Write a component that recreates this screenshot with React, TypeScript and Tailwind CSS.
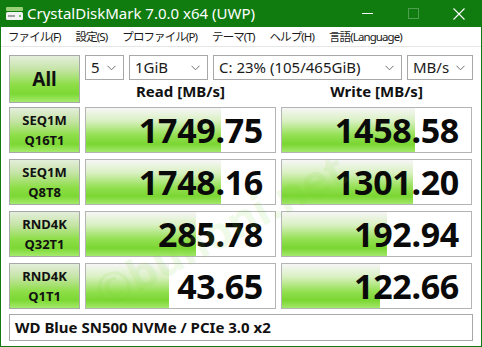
import React from 'react';

const rows = [
  { a: 'SEQ1M', b: 'Q16T1', read: '1749.75', write: '1458.58', rw: 135, ww: 133 },
  { a: 'SEQ1M', b: 'Q8T8', read: '1748.16', write: '1301.20', rw: 135, ww: 131 },
  { a: 'RND4K', b: 'Q32T1', read: '285.78', write: '192.94', rw: 110, ww: 105 },
  { a: 'RND4K', b: 'Q1T1', read: '43.65', write: '122.66', rw: 83, ww: 98 },
];

const btnGrad =
  'bg-[linear-gradient(to_bottom,#e4eedc_0%,#c4e4a4_30%,#8ede48_62%,#7cd834_82%,#a4ea6c_100%)]';
const barGrad =
  'bg-[linear-gradient(to_bottom,#f6f6f6_0%,#d8f0c0_30%,#94e052_62%,#7ad632_82%,#a2e86a_100%)]';

function Combo({ text, className }: { text: string; className: string }) {
  return (
    <div className={`h-[25px] border border-[#a8a8a8] bg-white flex items-center pl-[5px] pr-[7px] ${className}`}>
      <span className="flex-1 text-[15px] text-[#1a1a1a] leading-none whitespace-nowrap">{text}</span>
      <svg width="9" height="6" viewBox="0 0 9 6" className="ml-1">
        <path d="M0.5 0.8 L4.5 4.8 L8.5 0.8" fill="none" stroke="#707070" strokeWidth="1" />
      </svg>
    </div>
  );
}

function Meter({ value, width }: { value: string; width: number }) {
  return (
    <div className="relative w-[191px] h-full border border-[#b4b4b4] bg-white overflow-hidden">
      <div className={`absolute left-0 top-0 bottom-0 ${barGrad}`} style={{ width }} />
      <div className="relative h-full flex items-center justify-end pr-[12px] text-[34px] font-bold text-[#0a0a0a] leading-none tracking-[-0.3px]">
        {value}
      </div>
    </div>
  );
}

export default function App() {
  return (
    <div className="w-[482px] h-[347px] bg-[#107c10] flex flex-col font-['Noto_Sans',sans-serif] overflow-hidden">
      {/* Title bar */}
      <div className="h-[27px] flex items-center text-white shrink-0">
        <svg width="20" height="16" viewBox="0 0 20 16" className="ml-[5px] mr-[2px]">
          <rect x="1" y="1" width="17" height="4" rx="1" fill="#9ad07a" />
          <rect x="1" y="6" width="17" height="8" rx="1.5" fill="#f2f2f2" />
          <rect x="3" y="9" width="7" height="2" fill="#a0a0a0" />
          <circle cx="15" cy="10" r="1" fill="#4caf50" />
        </svg>
        <span className="text-[15px] leading-none">CrystalDiskMark 7.0.0 x64 (UWP)</span>
        <div className="ml-auto flex items-center h-full">
          <div className="w-[46px] h-full flex items-center justify-center">
            <div className="w-[11px] h-px bg-white" />
          </div>
          <div className="w-[46px] h-full flex items-center justify-center">
            <div className="w-[11px] h-[11px] border border-[#4f9f4f]" />
          </div>
          <div className="w-[46px] h-full flex items-center justify-center">
            <svg width="12" height="12" viewBox="0 0 12 12">
              <path d="M0.5 0.5 L11.5 11.5 M11.5 0.5 L0.5 11.5" stroke="white" strokeWidth="1.1" />
            </svg>
          </div>
        </div>
      </div>

      {/* Menu */}
      <div className="mx-px h-[19px] bg-white flex items-center gap-[15px] pl-[7px] text-[11.5px] tracking-[-0.9px] text-[#1a1a1a] font-['Noto_Sans','Noto_Sans_CJK_JP',sans-serif] leading-none shrink-0">
        <span>ファイル(F)</span>
        <span>設定(S)</span>
        <span>プロファイル(P)</span>
        <span>テーマ(T)</span>
        <span>ヘルプ(H)</span>
        <span>言語(Language)</span>
      </div>

      {/* Content */}
      <div className="relative mx-px mb-px flex-1 bg-white border-t border-[#e6e6e6] px-[8px] pt-[8px] flex flex-col">
        <div className="flex h-[48px] gap-[5px]">
          <div className={`w-[71px] h-full border border-[#a8a8a8] ${btnGrad} flex items-center justify-center text-[19px] font-bold text-[#111]`}>
            All
          </div>
          <div className="flex-1 flex flex-col">
            <div className="flex gap-[5px]">
              <Combo text="5" className="w-[39px]" />
              <Combo text="1GiB" className="w-[79px]" />
              <Combo text="C: 23% (105/465GiB)" className="flex-1" />
              <Combo text="MB/s" className="w-[66px]" />
            </div>
            <div className="flex-1 flex gap-[5px] text-[15px] font-bold text-[#111]">
              <div className="w-[191px] flex items-center justify-center">Read [MB/s]</div>
              <div className="w-[191px] flex items-center justify-center">Write [MB/s]</div>
            </div>
          </div>
        </div>

        <div className="mt-[4px] flex flex-col gap-[6px]">
          {rows.map((r, i) => (
            <div key={i} className="flex h-[46px] gap-[5px]">
              <div className={`w-[71px] h-full border border-[#a8a8a8] ${btnGrad} flex flex-col items-center justify-center gap-[7px] text-[13px] font-bold text-[#111] leading-none`}>
                <span>{r.a}</span>
                <span>{r.b}</span>
              </div>
              <Meter value={r.read} width={r.rw} />
              <Meter value={r.write} width={r.ww} />
            </div>
          ))}
        </div>

        <div className="mt-[5px] h-[27px] border border-[#a8a8a8] bg-white flex items-center pl-[5px] text-[15px] font-bold text-[#111]">
          WD Blue SN500 NVMe / PCIe 3.0 x2
        </div>

        <div className="pointer-events-none absolute left-[80px] top-[150px] -rotate-[28deg] text-[44px] font-bold text-[#7ad632] opacity-[0.1] whitespace-nowrap">
          ©bunoni.net
        </div>
      </div>
    </div>
  );
}
